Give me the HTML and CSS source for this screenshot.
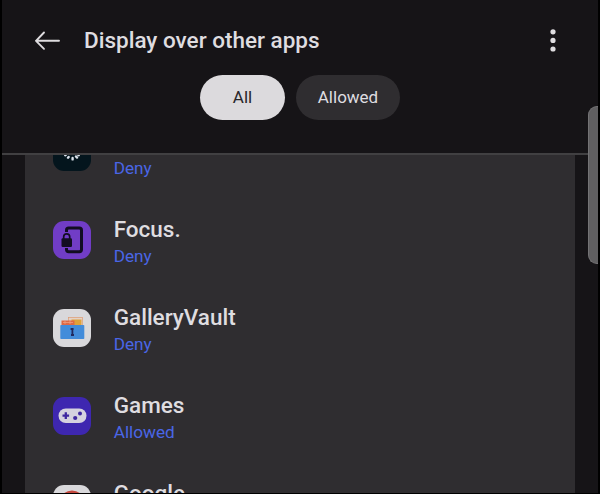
FILE: index.html
```html
<!DOCTYPE html>
<html lang="en">
<head>
<meta charset="utf-8">
<title>Display over other apps</title>
<link rel="stylesheet" href="styles.css">
</head>
<body>
<div class="screen">
  <header class="header">
    <div class="bar">
      <svg class="back" width="26" height="20" viewBox="0 0 26 20"><path d="M2 9.8H25M10 1.5L2 9.8L10 17.8"/></svg>
      <h1 class="title">Display over other apps</h1>
      <svg class="more" width="6" height="24" viewBox="0 0 6 24"><circle cx="3" cy="2.8" r="2.6"/><circle cx="3" cy="11.4" r="2.6"/><circle cx="3" cy="20" r="2.6"/></svg>
    </div>
    <nav class="tabs">
      <button class="tab active">All</button>
      <button class="tab other">Allowed</button>
    </nav>
  </header>
  <main class="list">
    <div class="row">
      <svg class="icon" viewBox="0 0 38 38"><rect width="38" height="38" rx="11" fill="#04151d"/><g stroke="#dce2ec" stroke-width="2.4" stroke-linecap="round"><path d="M19.6 25V26.4M15.6 24L15 24.7M23 23.4L24 24.6M12.8 21.8L12.2 22.2M25.2 21.8L25.8 22.2"/></g></svg>
      <div class="text"><div class="name"></div><div class="state">Deny</div></div>
    </div>
    <div class="row">
      <svg class="icon" viewBox="0 0 38 38"><rect width="38" height="38" rx="11" fill="#713dc6"/><path d="M13.5 11V9.2Q13.5 7 15.7 7H26.3Q28.5 7 28.5 9.2V28.5Q28.5 30.7 26.3 30.7H15.7Q13.5 30.7 13.5 28.5V27" fill="none" stroke="#120d22" stroke-width="3"/><rect x="8.5" y="17.2" width="10.5" height="8.8" rx="1.2" fill="#120d22"/><path d="M10.7 18V15.8a3 3 0 0 1 6 0V18" fill="none" stroke="#120d22" stroke-width="1.7"/></svg>
      <div class="text"><div class="name">Focus.</div><div class="state">Deny</div></div>
    </div>
    <div class="row">
      <svg class="icon" viewBox="0 0 38 38"><rect width="38" height="38" rx="11" fill="#d9d8db"/><rect x="15.5" y="8.5" width="14" height="10" fill="#e3d2c8" stroke="#df9a73" stroke-width=".7"/><rect x="18.5" y="10.5" width="10" height="8" fill="#dfa23b"/><rect x="8.5" y="11.5" width="13" height="7" fill="#df6946"/><path d="M10 13.5h10M12 12v3M17 12v3" stroke="#efa080" stroke-width=".8"/><rect x="7.3" y="16" width="24" height="14" rx=".8" fill="#438cda"/><path d="M19.4 19v7.5M17.6 20h3M18 26h3" fill="none" stroke="#20295f" stroke-width="1.8"/></svg>
      <div class="text"><div class="name">GalleryVault</div><div class="state">Deny</div></div>
    </div>
    <div class="row">
      <svg class="icon" viewBox="0 0 38 38"><rect width="38" height="38" rx="11" fill="#3e27b0"/><rect x="5.5" y="11.5" width="28" height="14.5" rx="7.25" fill="#d5d2df"/><path d="M12.8 15.3v6.6M9.5 18.6h6.6" stroke="#3e27a0" stroke-width="2.3"/><circle cx="22.2" cy="21" r="2.1" fill="#3e27a0"/><circle cx="27" cy="16.5" r="2" fill="#3e27a0"/></svg>
      <div class="text"><div class="name">Games</div><div class="state">Allowed</div></div>
    </div>
    <div class="row">
      <svg class="icon" viewBox="0 0 38 38"><rect width="38" height="38" rx="11" fill="#d9d8db"/><circle cx="19" cy="18" r="12.6" fill="#c5483e"/></svg>
      <div class="text"><div class="name">Google</div><div class="state"></div></div>
    </div>
  </main>
  <div class="handle"></div>
</div>
</body>
</html>
```
FILE: styles.css
```css
* { box-sizing: border-box; }
body { margin: 0; background: #000; overflow: hidden; }
.screen {
  position: relative;
  display: flex;
  flex-direction: column;
  width: 600px;
  height: 494px;
  border: solid #000;
  border-width: 0 2px 1px;
  background: #161417;
  color: #dfdde0;
  font-family: Roboto, sans-serif;
  overflow: hidden;
}
.header {
  flex: none;
  height: 155px;
  padding-top: 20px;
  border-bottom: 2px solid #414042;
}
.bar {
  display: flex;
  align-items: center;
  height: 41px;
  padding: 0 42px 0 32px;
}
.back { fill: none; stroke: #dfdde0; stroke-width: 1.9; stroke-linecap: round; stroke-linejoin: round; }
.title { margin: 0 auto 0 24px; padding-bottom: 2px; font-size: 22.5px; font-weight: 500; line-height: 30px; white-space: nowrap; }
.more { fill: #dfdde0; }
.tabs { display: flex; justify-content: center; gap: 11px; margin-top: 14px; }
.tab {
  height: 45px;
  padding: 0 0 1px;
  border: 0;
  border-radius: 23px;
  background: #2f2d30;
  color: #dfdde0;
  font: 400 17px Roboto, sans-serif;
}
.active { width: 85px; background: #dcdadd; color: #29272a; }
.other { width: 104px; }
.list {
  flex: 1;
  min-height: 0;
  margin: 0 23px;
  overflow: hidden;
  background: #2f2d30;
}
.row { display: flex; align-items: center; gap: 22.3px; height: 88px; padding-left: 28.4px; }
.row:first-child { margin-top: -47px; }
.icon { flex: none; width: 38px; height: 38px; }
.text { padding-top: 3px; }
.name { height: 29px; font-size: 22.5px; font-weight: 500; line-height: 29px; }
.state { height: 24px; color: #4a66e6; font-size: 17.2px; line-height: 24px; }
.handle {
  position: absolute;
  top: 106px;
  right: 0;
  width: 10px;
  height: 158px;
  border: 1px solid #747375;
  border-right: 0;
  border-radius: 9px 0 0 9px;
  background: #605f61;
}
```
